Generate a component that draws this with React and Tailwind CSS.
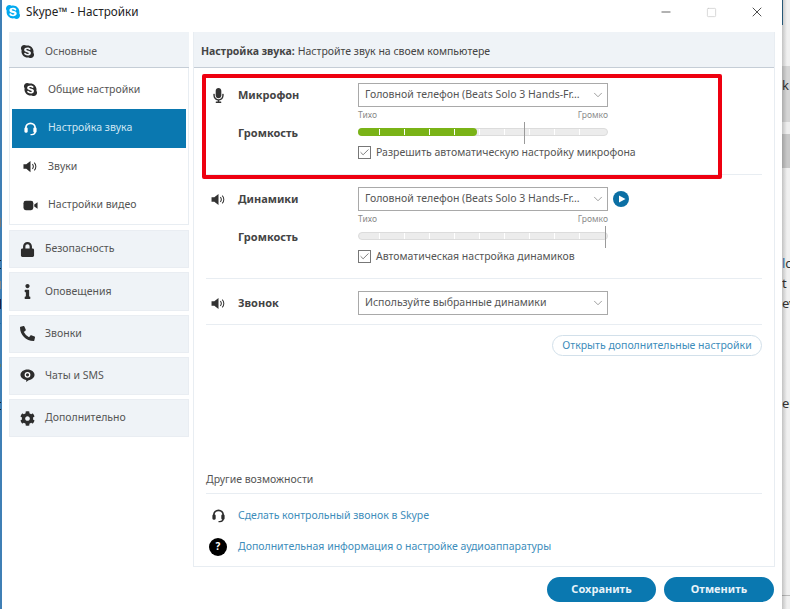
import { FaSkype, FaLock, FaInfo, FaPhoneAlt, FaCog, FaMicrophone } from 'react-icons/fa'
import { ChevronDown, Check, Minus, X, Square } from 'lucide-react'

const FONT = 'font-["Noto_Sans","Open_Sans",sans-serif]'

// bits of the desktop that show at the very left edge
const EDGE = [
  'h-[218px]', 'h-[9px] bg-[#777]', 'h-[33px]', 'h-px bg-[#123]', 'h-[7px]', 'h-px bg-[#123]',
  'h-[12px]', 'h-[8px] bg-[#888]', 'h-[10px]', 'h-[10px] bg-[#1a1f4d]', 'h-[14px]', 'h-px bg-[#1f6fa8]',
  'h-[40px]', 'h-[3px] bg-[#5f7f70]', 'h-[35px]', 'h-px bg-[#123]', 'h-[6px]', 'h-px bg-[#123]',
]

function Headset({ className = '' }) {
  return (
    <svg viewBox="0 0 16 16" className={className} fill="none" stroke="currentColor">
      <path d="M3 10V7.500a5 5 0 0 1 10 0V10" strokeWidth="1.800" />
      <rect x="1.500" y="7" width="3.500" height="5.500" rx="1.200" fill="currentColor" stroke="none" />
      <rect x="11" y="7" width="3.500" height="5.500" rx="1.200" fill="currentColor" stroke="none" />
      <path d="M13 11.500c0 2-1.600 3-3.500 3H8" strokeWidth="1.400" />
    </svg>
  )
}

function Speaker({ className = '' }) {
  return (
    <svg viewBox="0 0 16 14" className={className} fill="none" stroke="currentColor">
      <path d="M0.500 4.500h3L8 1v12L3.500 9.500h-3z" fill="currentColor" stroke="none" />
      <path d="M10 4.500a3.500 3.500 0 0 1 0 5" strokeWidth="1.100" />
      <path d="M12 2.800a6 6 0 0 1 0 8.400" strokeWidth="1.100" />
    </svg>
  )
}

function Camera({ className = '' }) {
  return (
    <svg viewBox="0 0 16 12" className={className} fill="currentColor">
      <rect x="0.500" y="1" width="10.500" height="10" rx="2.500" />
      <path d="M12 5l3.500-2.500v7L12 7z" />
    </svg>
  )
}

function ChatEye({ className = '' }) {
  return (
    <svg viewBox="0 0 16 16" className={className}>
      <path d="M8 1.500c4.200 0 7.500 2.600 7.500 5.800 0 3-2.800 5.400-6.300 5.700L6.500 15l.2-2.100C3 12.300.5 10 .5 7.300.5 4.100 3.800 1.500 8 1.500z" fill="currentColor" />
      <circle cx="8" cy="7.300" r="3.100" fill="#fff" />
      <circle cx="8" cy="7.300" r="1.700" fill="currentColor" />
    </svg>
  )
}

function PlayButton() {
  return (
    <span className="flex h-4 w-4 items-center justify-center rounded-full bg-[#0b6fa4]">
      <svg viewBox="0 0 8 8" className="ml-px h-2 w-2" fill="#fff">
        <path d="M1 0.500l6.500 3.500L1 7.500z" />
      </svg>
    </span>
  )
}

function Select({ children }) {
  return (
    <div className="flex h-[24px] w-[250px] items-center justify-between border border-[#a9a9a9] bg-white pl-[6px] pr-[2px] text-[10.5px] whitespace-nowrap text-[#555]">
      <span>{children}</span>
      <ChevronDown className="h-[14px] w-[14px] text-[#777]" strokeWidth={1.200} />
    </div>
  )
}

function Slider({ fill = 0, thumb }) {
  return (
    <div className="relative h-[8px] w-[250px] rounded-full border border-[#dcdcdc] bg-[#ececec]">
      {fill > 0 && <div className="absolute -inset-y-px -left-px rounded-full bg-[#7ab317]" style={{ width: fill }} />}
      <div className="absolute inset-0 flex pl-[20px]">
        {Array.from({ length: 9 }).map((_, i) => (
          <span key={i} className="h-full w-[25px] shrink-0">
            <span className="block h-full w-px bg-white" />
          </span>
        ))}
      </div>
      <div className="absolute -top-[7px] h-[22px] w-px bg-[#9a9a9a]" style={{ left: thumb }} />
    </div>
  )
}

function AudioSection({ icon, label, select, fill, thumb, check, play }) {
  return (
    <div className="ml-[12px] mr-[12px] flex flex-col border-b border-[#e8edf2] pt-[12px] pb-[15px]">
      <div className="grid grid-cols-[32px_120px_250px_auto] items-center">
        <span className="flex justify-center pr-[8px] text-[#333]">{icon}</span>
        <span className="text-[11px] font-bold text-[#444]">{label}</span>
        <Select>{select}</Select>
        {play && <span className="ml-[5px]"><PlayButton /></span>}
      </div>
      <div className="ml-[152px] mt-[1px] flex h-[14px] w-[250px] items-center justify-between text-[8.5px] text-[#8b8b8b]">
        <span>Тихо</span>
        <span>Громко</span>
      </div>
      <div className="mt-[6px] grid h-[8px] grid-cols-[32px_120px_250px] grid-rows-[8px] items-center">
        <span />
        <span className="text-[11px] leading-none font-bold text-[#444]">Громкость</span>
        <Slider fill={fill} thumb={thumb} />
      </div>
      <div className="ml-[152px] mt-[10px] flex h-[13px] items-center gap-[5px] text-[10.5px] text-[#555]">
        <span className="flex h-[13px] w-[13px] items-center justify-center border border-[#777] bg-white">
          <Check className="h-[11px] w-[11px] text-[#444]" strokeWidth={1.500} />
        </span>
        {check}
      </div>
    </div>
  )
}

function SideHeader({ Icon, label, active }) {
  return (
    <div className={`flex items-center text-[10.5px] text-[#555] bg-[#eff3f7] ${active ? 'h-[36px] border-b border-[#c5cdd6] pl-[11px] pt-[4px]' : 'h-[38.25px] border border-[#e9edf2] pl-[10px]'}`}>
      <span className="flex w-[25px] text-[#2d2d2d]"><Icon className="h-[15px] w-[15px]" /></span>
      {label}
    </div>
  )
}

function SideItem({ Icon, label, active }) {
  return (
    <div className={`flex h-[38.5px] items-center pl-[11px] text-[10.5px] ${active ? 'bg-[#0a78b0] text-[#cfe6f3]' : 'text-[#555]'}`}>
      <span className={`flex w-[25px] ${active ? 'text-white' : 'text-[#2d2d2d]'}`}><Icon className="h-[15px] w-[15px]" /></span>
      {label}
    </div>
  )
}

export default function App() {
  return (
    <div className={`relative flex h-[609px] w-[790px] overflow-hidden bg-white ${FONT}`}>
      {/* Left edge of the desktop */}
      <div className="flex w-[2px] shrink-0 flex-col bg-[#3f7fb5]">
        {EDGE.map((c, i) => <div key={i} className={`w-px shrink-0 ${c}`} />)}
      </div>

      {/* Window */}
      <div className="relative flex w-[780px] shrink-0 flex-col">
        <div className="flex h-[32px] shrink-0 items-center pb-[8px]">
          <FaSkype className="ml-[3px] h-[16px] w-[16px] text-[#00a9f0]" />
          <span className="ml-[5px] text-[11.7px] text-[#222]">Skype™ - Настройки</span>
          <div className="ml-auto flex items-center">
            <Minus className="h-[14px] w-[14px] text-[#222]" strokeWidth={1.200} />
            <Square className="ml-[33px] h-[11px] w-[11px] text-[#c8c8c8]" strokeWidth={1.500} />
            <X className="ml-[32px] mr-[17px] h-[16px] w-[16px] text-[#222]" strokeWidth={1.200} />
          </div>
        </div>

        <div className="flex flex-1 pl-[7px]">
          {/* Sidebar */}
          <div className="flex w-[180px] shrink-0 flex-col">
            <SideHeader Icon={FaSkype} label="Основные" active />
            <div className="mb-[5px] h-[157px] border border-t-0 border-[#e8edf2] px-[2px] pt-[2.5px]">
              <SideItem Icon={FaSkype} label="Общие настройки" />
              <SideItem Icon={Headset} label="Настройка звука" active />
              <SideItem Icon={Speaker} label="Звуки" />
              <SideItem Icon={Camera} label="Настройки видео" />
            </div>
            <div className="flex flex-col gap-[4px]">
              <SideHeader Icon={FaLock} label="Безопасность" />
              <SideHeader Icon={FaInfo} label="Оповещения" />
              <SideHeader Icon={FaPhoneAlt} label="Звонки" />
              <SideHeader Icon={ChatEye} label="Чаты и SMS" />
              <SideHeader Icon={FaCog} label="Дополнительно" />
            </div>
          </div>

          {/* Main column */}
          <div className="ml-[4px] flex w-[582px] shrink-0 flex-col">
            <div className="flex h-[535px] flex-col border-x border-b border-[#e8edf2]">
              <div className="flex h-[36px] shrink-0 items-center border-b border-[#c5cdd6] bg-[#eff3f7] pl-[7px] pt-[4px] text-[10.5px] text-[#444]">
                <span className="font-bold">Настройка звука:</span>
                <span className="ml-[3px]">Настройте звук на своем компьютере</span>
              </div>
              <div className="pt-[3px]">
                <AudioSection
                  icon={<FaMicrophone className="h-[15px] w-[15px]" />}
                  label="Микрофон"
                  select="Головной телефон (Beats Solo 3 Hands-Fr..."
                  fill={119}
                  thumb={165}
                  check="Разрешить автоматическую настройку микрофона"
                />
                <AudioSection
                  icon={<Speaker className="h-[13px] w-[15px]" />}
                  label="Динамики"
                  select="Головной телефон (Beats Solo 3 Hands-Fr..."
                  fill={0}
                  thumb={246}
                  check="Автоматическая настройка динамиков"
                  play
                />
                <div className="ml-[12px] mr-[12px] border-b border-[#e8edf2] pt-[12px] pb-[9px]">
                  <div className="grid grid-cols-[32px_120px_250px] items-center">
                    <span className="flex justify-center pr-[8px] text-[#333]"><Speaker className="h-[13px] w-[15px]" /></span>
                    <span className="text-[11px] font-bold text-[#444]">Звонок</span>
                    <Select>Используйте выбранные динамики</Select>
                  </div>
                </div>
                <div className="ml-[12px] mr-[12px] mt-[10px] flex justify-end">
                  <span className="flex h-[21px] w-[210px] items-center justify-center rounded-full border border-[#d2e0ea] text-[10.5px] text-[#3d8dbb]">
                    Открыть дополнительные настройки
                  </span>
                </div>
              </div>

              <div className="ml-[12px] mr-[12px] mt-auto pb-[2px]">
                <div className="flex h-[24px] items-center border-b border-[#e8edf2] pb-[4px] text-[10.5px] text-[#555]">Другие возможности</div>
                <div className="flex h-[39px] items-center pt-[4px] text-[10.5px] text-[#3d8dbb]">
                  <span className="flex w-[32px] justify-center pr-[8px] text-[#2d2d2d]"><Headset className="h-[15px] w-[15px]" /></span>
                  Сделать контрольный звонок в Skype
                </div>
                <div className="flex h-[31px] items-center pb-[4px] text-[10.5px] text-[#3d8dbb]">
                  <span className="flex w-[32px] justify-center pr-[8px]">
                    <span className="flex h-[18px] w-[18px] items-center justify-center rounded-full bg-black text-[10px] font-bold text-white">?</span>
                  </span>
                  Дополнительная информация о настройке аудиоаппаратуры
                </div>
              </div>
            </div>

            <div className="mt-[10px] flex justify-end gap-[8px] pr-px">
              <span className="flex h-[25px] w-[109px] items-center justify-center rounded-full bg-[#0a78b0] text-[11px] font-bold text-[#e8f3f9]">Сохранить</span>
              <span className="flex h-[25px] w-[110px] items-center justify-center rounded-full bg-[#0a78b0] text-[11px] font-bold text-[#e8f3f9]">Отменить</span>
            </div>
          </div>
        </div>
      </div>

      {/* Desktop showing behind the window */}
      <div className="relative flex w-[8px] shrink-0 flex-col overflow-hidden bg-[#f0f0f0] text-[13px] leading-[20px] text-[#333]">
        <div className="h-[66px] shrink-0"><div className="h-[25px] w-px bg-[#2f6a8f]" /></div>
        <div className="flex h-[56px] shrink-0 items-start bg-[#d5d5d5] pt-[9px]">k</div>
        <div className="h-[12px] shrink-0 bg-[#eeeeee]" />
        <div className="h-[34px] shrink-0 bg-[#c8c8c8]" />
        <div className="h-[85px] shrink-0" />
        <div className="h-[20px] shrink-0"><span className="text-[#2f6fb0]">l</span>c</div>
        <div className="h-[20px] shrink-0">t</div>
        <div className="h-[20px] shrink-0">ev</div>
        <div className="h-[80px] shrink-0" />
        <div className="h-[20px] shrink-0">er</div>
        <div className="h-[182px] shrink-0" />
        <div className="h-px shrink-0 bg-[#bbb]" />
        <div className="absolute inset-y-0 left-0 w-[5px] bg-gradient-to-r from-[#00000030] to-transparent" />
      </div>

      {/* Red annotation drawn over the screenshot */}
      <div className="absolute left-[202px] top-[74px] h-[105px] w-[520px] rounded-[2px] border-[4px] border-[#ee0010]" />
    </div>
  )
}
